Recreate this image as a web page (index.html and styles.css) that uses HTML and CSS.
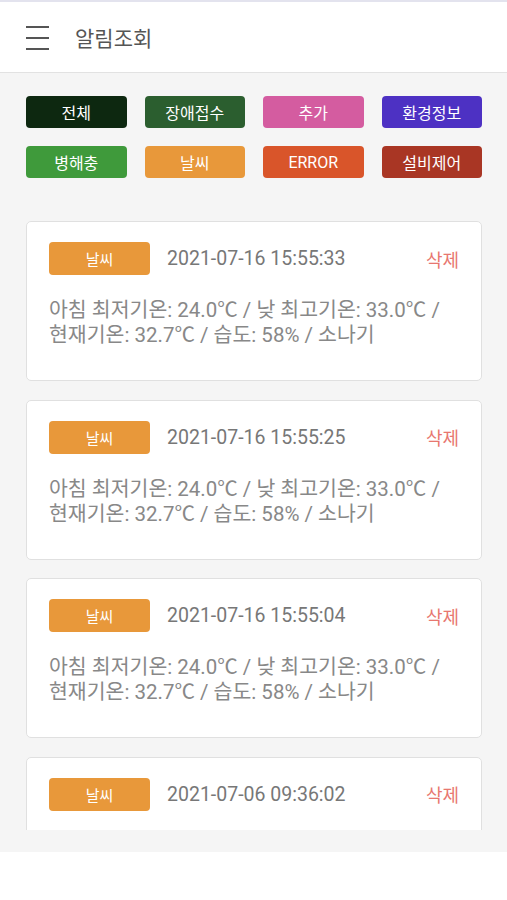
FILE: index.html
```html
<!DOCTYPE html>
<html>
<head>
  <meta charset="UTF-8">
  <title>알림조회</title>
  <meta name="viewport" content="width=device-width, initial-scale=1">
  <link rel="stylesheet" href="styles.css">
</head>
<body>
  <div class="topline"></div>
  <header class="header">
    <span class="menu"><i></i><i></i><i></i></span>
    <h1>알림조회</h1>
  </header>

  <main class="main">
    <div class="filters">
      <button class="f all">전체</button>
      <button class="f fault">장애접수</button>
      <button class="f add">추가</button>
      <button class="f env">환경정보</button>
      <button class="f pest">병해충</button>
      <button class="f weather">날씨</button>
      <button class="f error">ERROR</button>
      <button class="f ctrl">설비제어</button>
    </div>

    <div class="list">
      <div class="card">
        <div class="card-head">
          <span class="tag weather">날씨</span>
          <span class="date">2021-07-16 15:55:33</span>
          <a class="del">삭제</a>
        </div>
        <p class="msg">아침 최저기온: 24.0℃ / 낮 최고기온: 33.0℃ / 현재기온: 32.7℃ / 습도: 58% / 소나기</p>
      </div>
      <div class="card">
        <div class="card-head">
          <span class="tag weather">날씨</span>
          <span class="date">2021-07-16 15:55:25</span>
          <a class="del">삭제</a>
        </div>
        <p class="msg">아침 최저기온: 24.0℃ / 낮 최고기온: 33.0℃ / 현재기온: 32.7℃ / 습도: 58% / 소나기</p>
      </div>
      <div class="card">
        <div class="card-head">
          <span class="tag weather">날씨</span>
          <span class="date">2021-07-16 15:55:04</span>
          <a class="del">삭제</a>
        </div>
        <p class="msg">아침 최저기온: 24.0℃ / 낮 최고기온: 33.0℃ / 현재기온: 32.7℃ / 습도: 58% / 소나기</p>
      </div>
      <div class="card">
        <div class="card-head">
          <span class="tag weather">날씨</span>
          <span class="date">2021-07-06 09:36:02</span>
          <a class="del">삭제</a>
        </div>
      </div>
    </div>
  </main>

  <footer class="footer"></footer>
</body>
</html>
```

FILE: styles.css
```css
body {
  margin: 0;
  font-family: Roboto, "Noto Sans CJK KR", sans-serif;
  background: #f5f5f5;
}
.topline {
  height: 2px;
  background: #e3e3ee;
}
.header {
  height: 70px;
  background: #fff;
  border-bottom: 1px solid #e2e2e2;
  display: flex;
  align-items: center;
}
.menu {
  width: 23px;
  margin-left: 26px;
  margin-right: 26px;
  display: flex;
  flex-direction: column;
  gap: 9px;
  margin-top: 2px;
}
.menu i {
  display: block;
  height: 2px;
  background: #555;
}
.header h1 {
  margin: 0;
  font-size: 21px;
  font-weight: normal;
  color: #555;
}
.main {
  height: 779px;
  padding: 23px 25px 0 26px;
  box-sizing: border-box;
}
.filters {
  display: grid;
  grid-template-columns: repeat(4, 1fr);
  column-gap: 18px;
  row-gap: 18px;
}
.f {
  height: 32px;
  border: none;
  border-radius: 4px;
  color: #fff;
  font-family: Roboto, "Noto Sans CJK KR", sans-serif;
  font-size: 16px;
  padding: 0;
}
.all { background: #0d2810; }
.fault { background: #2b5e2f; }
.add { background: #d45ca0; }
.env { background: #4d31c3; }
.pest { background: #3f9a3b; }
.weather { background: #e8983a; }
.error { background: #d9552a; }
.ctrl { background: #a93624; }

.list {
  margin-top: 43px;
  height: 609px;
  overflow: hidden;
  display: flex;
  flex-direction: column;
  gap: 18.5px;
}
.card {
  flex: none;
  height: 160px;
  box-sizing: border-box;
  background: #fff;
  border: 1px solid #e0e0e0;
  border-radius: 5px;
  padding: 20px 22px 0 22px;
}
.card-head {
  display: flex;
  align-items: center;
}
.tag {
  width: 101px;
  height: 33px;
  border-radius: 4px;
  color: #fff;
  font-size: 15px;
  display: flex;
  align-items: center;
  justify-content: center;
}
.date {
  margin-left: 17px;
  font-size: 19.5px;
  color: #777;
}
.del {
  margin-left: auto;
  font-size: 18px;
  color: #e8776f;
}
.msg {
  margin: 23px 0 0;
  font-size: 20.5px;
  line-height: 25px;
  color: #888;
  word-break: keep-all;
}
.footer {
  height: 48px;
  background: #fff;
}
```
